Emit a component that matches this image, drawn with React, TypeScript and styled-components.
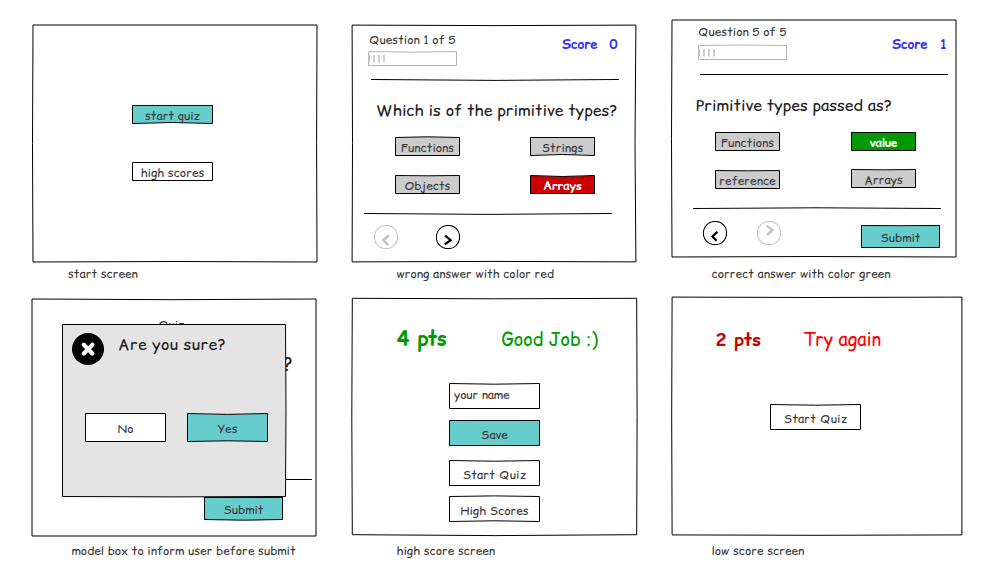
import React from 'react';
import styled, { createGlobalStyle } from 'styled-components';

const ink = '#000000';
const teal = '#66cccc';
const grey = '#cccccc';
const faint = '#c4c4c4';

const GlobalStyle = createGlobalStyle`
  body {
    margin: 0;
    background: #ffffff;
  }
  * {
    box-sizing: border-box;
  }
`;

const Board = styled.main`
  width: 981px;
  height: 564px;
  padding-left: 32px;
  overflow: hidden;
  display: grid;
  grid-template-columns: 320px 320px 309px;
  grid-template-rows: 281px 277px;
  font-family: 'Comic Relief', 'Comic Sans MS', 'Comic Neue', 'Open Sans', sans-serif;
`;

const Figure = styled.figure<{ $top: number; $left?: number }>`
  margin: 0;
  padding: ${(p) => p.$top}px 0 0 ${(p) => p.$left ?? 0}px;
  display: flex;
  flex-direction: column;
  align-items: flex-start;
`;

const Caption = styled.figcaption<{ $indent: number }>`
  margin: auto 0 -1px ${(p) => p.$indent}px;
  font-size: 12px;
  line-height: 16px;
  color: #3a3a3a;
  white-space: nowrap;
`;

const Label = styled.span<{ $track?: number; $color?: string; $bold?: boolean }>`
  font-size: 12px;
  line-height: 16px;
  font-weight: ${(p) => (p.$bold ? 700 : 400)};
  letter-spacing: ${(p) => p.$track ?? 0}px;
  color: ${(p) => p.$color ?? '#3a3a3a'};
  white-space: nowrap;
`;

const Surface = styled.div<{ $w: number; $h: number }>`
  position: relative;
  isolation: isolate;
  flex: none;
  width: ${(p) => p.$w}px;
  height: ${(p) => p.$h}px;
`;

const Screen = styled(Surface)`
  display: flex;
  flex-direction: column;
  align-items: flex-start;
`;

const Button = styled(Surface)`
  display: flex;
  align-items: center;
  justify-content: center;
  padding-top: 3px;
`;

const Field = styled(Button)`
  justify-content: flex-start;
  padding: 0 0 2px 5px;
`;

const Outline = styled.svg`
  position: absolute;
  inset: 0;
  z-index: -1;
  overflow: visible;
`;

type Bow = [number, number, number, number];

/* Hand-drawn rectangle; bow bends the top, right, bottom and left edges. */
function Sketch({ w, h, fill = '#ffffff', stroke = ink, bow = [0, 0, 0, 0], inset = 0.5 }: {
  w: number; h: number; fill?: string; stroke?: string; bow?: Bow; inset?: number;
}) {
  const a = inset;
  const r = w - inset;
  const b = h - inset;
  const d = `M${a} ${a}Q${w / 2} ${a + bow[0] * 2} ${r} ${a}Q${r + bow[1] * 2} ${h / 2} ${r} ${b}Q${w / 2} ${b + bow[2] * 2} ${a} ${b}Q${a + bow[3] * 2} ${h / 2} ${a} ${a}Z`;
  return (
    <Outline width={w} height={h}>
      <path d={d} fill={fill} stroke={stroke} strokeWidth={1} strokeLinejoin="round" />
    </Outline>
  );
}

function SketchButton({ w, h, text, track, fill, bow, bold, color }: {
  w: number; h: number; text: string; track?: number; fill?: string; bow?: Bow; bold?: boolean; color?: string;
}) {
  return (
    <Button $w={w} $h={h}>
      <Sketch w={w} h={h} fill={fill} bow={bow} />
      <Label $track={track} $bold={bold} $color={color}>{text}</Label>
    </Button>
  );
}

const RuleSvg = styled.svg<{ $top: number; $left: number }>`
  display: block;
  flex: none;
  overflow: visible;
  margin: ${(p) => p.$top}px 0 0 ${(p) => p.$left}px;
`;

function Rule({ top, left, bow = 0, w = 248 }: { top: number; left: number; bow?: number; w?: number }) {
  return (
    <RuleSvg width={w} height={1} $top={top} $left={left}>
      <path d={`M.5 .5Q${w / 2} ${0.5 + bow * 2} ${w - 0.5} .5`} fill="none" stroke={ink} strokeLinecap="round" />
    </RuleSvg>
  );
}

const StartMenu = styled.div`
  display: flex;
  flex-direction: column;
  gap: 38px;
  padding: 80px 0 0 99px;
`;

const Head = styled.div<{ $top: number; $left: number; $height: number }>`
  display: flex;
  height: ${(p) => p.$height}px;
  padding: ${(p) => p.$top}px 0 0 ${(p) => p.$left}px;
`;

const Progress = styled.div<{ $gap: number; $indent: number }>`
  display: flex;
  flex-direction: column;
  gap: ${(p) => p.$gap}px;
  width: 194px;
  & > span {
    padding-left: ${(p) => p.$indent}px;
  }
`;

const Score = styled.div<{ $top: number }>`
  display: flex;
  gap: 12px;
  margin-top: ${(p) => p.$top}px;
  font-size: 13px;
  line-height: 16px;
  font-weight: 700;
  letter-spacing: -0.1px;
  color: #3333ff;
`;

const Question = styled.h2<{ $top: number; $left: number }>`
  margin: ${(p) => p.$top}px 0 0 ${(p) => p.$left}px;
  font-size: 16px;
  line-height: 20px;
  font-weight: 400;
  color: #222222;
  white-space: nowrap;
`;

const Options = styled.div<{ $gap: number }>`
  display: flex;
  gap: ${(p) => p.$gap}px;
  padding: 17px 0 0 43px;
`;

const OptionColumn = styled.div<{ $gap: number }>`
  display: flex;
  flex-direction: column;
  gap: ${(p) => p.$gap}px;
`;

const Nav = styled.div<{ $left: number; $top: number; $gap: number }>`
  display: flex;
  align-items: flex-start;
  gap: ${(p) => p.$gap}px;
  padding: ${(p) => p.$top}px 0 0 ${(p) => p.$left}px;
`;

const SubmitSlot = styled.div`
  margin: 4px 0 0 50px;
`;

function Bar({ bow }: { bow: Bow }) {
  return (
    <Surface $w={89} $h={15}>
      <Sketch w={89} h={15} stroke="#b4b4b4" bow={bow} />
      <svg width="20" height="15" display="block">
        <path d="M1.2 4V11.5M6 4V11.5M11 4V11.5M16 4V11.5" stroke={faint} strokeWidth="1.6" />
      </svg>
    </Surface>
  );
}

function NavArrow({ d, off }: { d: string; off?: boolean }) {
  const c = off ? faint : ink;
  return (
    <svg width="24" height="24" fill="none" stroke={c}>
      <path d="M12 .4C18.6 .2 23.7 5.4 23.6 12C23.7 18.5 18.5 23.7 12 23.6C5.4 23.7 .3 18.5 .4 12.2C.2 5.6 5.5 .3 12.3 .5" strokeWidth="1.1" />
      <path d={d} strokeWidth={off ? 2.6 : 2.2} />
    </svg>
  );
}

const Behind = styled.div`
  display: flex;
  flex-direction: column;
  width: 284px;
  & > span:first-child {
    margin: 18px 0 0 126px;
  }
`;

const BehindQuestion = styled.div`
  margin: 20px 23px 0 0;
  text-align: right;
  font-size: 18px;
  line-height: 24px;
  color: #222222;
`;

const BehindSubmit = styled.div`
  margin: 17px 0 0 172px;
`;

const Modal = styled(Surface)`
  position: absolute;
  left: 30px;
  top: 25px;
  z-index: 1;
  display: flex;
  flex-direction: column;
`;

const ModalHead = styled.div`
  display: flex;
  padding: 9px 0 0 10px;
`;

const ModalTitle = styled.h2`
  margin: 1px 0 0 14px;
  font-size: 16px;
  line-height: 20px;
  font-weight: 400;
  letter-spacing: 0.35px;
  color: #222222;
`;

const ModalActions = styled.div`
  display: flex;
  gap: 21px;
  padding: 48px 0 0 23px;
`;

const Result = styled.div<{ $gap: number; $top: number; $left: number; $size: number }>`
  display: flex;
  align-items: baseline;
  gap: ${(p) => p.$gap}px;
  height: ${(p) => p.$top + 26}px;
  padding: ${(p) => p.$top}px 0 0 ${(p) => p.$left}px;
  line-height: 26px;
  white-space: nowrap;
  font-size: ${(p) => p.$size}px;
`;

const Points = styled.strong<{ $color: string; $track: number }>`
  font-weight: 700;
  letter-spacing: ${(p) => p.$track}px;
  color: ${(p) => p.$color};
`;

const Verdict = styled.span<{ $color: string }>`
  font-size: 18px;
  color: ${(p) => p.$color};
`;

const ScoreForm = styled.div`
  display: grid;
  grid-template-rows: 37px 40px 36px 26px;
  padding: 31px 0 0 97px;
`;

const Retry = styled.div`
  padding: 51px 0 0 98px;
`;

export default function App() {
  return (
    <>
      <GlobalStyle />
      <Board>
        <Figure $top={25} $left={1}>
          <Screen $w={284} $h={237}>
            <Sketch w={284} h={237} inset={0} bow={[0, -0.4, -0.5, -0.5]} />
            <StartMenu>
              <SketchButton w={81} h={19} text="start quiz" fill={teal} bow={[0, 0, -1, 0]} />
              <SketchButton w={81} h={19} text="high scores" />
            </StartMenu>
          </Screen>
          <Caption $indent={35}>start screen</Caption>
        </Figure>

        <Figure $top={25}>
          <Screen $w={284} $h={237}>
            <Sketch w={284} h={237} inset={0.1} bow={[0.5, -0.9, -0.5, 0.4]} />
            <Head $top={7} $left={16} $height={54}>
              <Progress $gap={3} $indent={1}>
                <Label>Question 1 of 5</Label>
                <Bar bow={[0.7, 0, 0, 0]} />
              </Progress>
              <Score $top={4}><span>Score</span><span>0</span></Score>
            </Head>
            <Rule top={0} left={19} bow={0.9} />
            <Question $top={20} $left={24}>Which is of the primitive types?</Question>
            <Options $gap={70}>
              <OptionColumn $gap={19}>
                <SketchButton w={65} h={19} text="Functions" fill={grey} bow={[-0.7, 0, 0, 0]} />
                <SketchButton w={65} h={19} text="Objects" fill={grey} bow={[0.3, 0, 0, 0]} />
              </OptionColumn>
              <OptionColumn $gap={19}>
                <SketchButton w={65} h={19} text="Strings" fill={grey} bow={[0, 0, -1, 0]} />
                <SketchButton w={65} h={19} text="Arrays" track={-0.2} fill="#cc0000" bow={[1, 0, 0, 0]} bold color="#ffffff" />
              </OptionColumn>
            </Options>
            <Rule top={19} left={12} bow={0.9} />
            <Nav $left={22} $top={11} $gap={38}>
              <NavArrow off d="M15 10.3L9.5 15L14.2 20.3" />
              <NavArrow d="M9 10.5L14.7 15.2L8.8 19.4" />
            </Nav>
          </Screen>
          <Caption $indent={44.5}>wrong answer with color red</Caption>
        </Figure>

        <Figure $top={20}>
          <Screen $w={284} $h={237}>
            <Sketch w={284} h={237} inset={0} bow={[0, 0, -0.5, -0.5]} />
            <Head $top={4} $left={26} $height={54}>
              <Progress $gap={5} $indent={-1}>
                <Label>Question 5 of 5</Label>
                <Bar bow={[-0.5, 0, 0, 0]} />
              </Progress>
              <Score $top={12}><span>Score</span><span>1</span></Score>
            </Head>
            <Rule top={0} left={28} />
            <Question $top={20} $left={24}>Primitive types passed as?</Question>
            <Options $gap={71}>
              <OptionColumn $gap={19}>
                <SketchButton w={65} h={19} text="Functions" fill={grey} />
                <SketchButton w={65} h={19} text="reference" fill={grey} bow={[0.3, 0, 0, 0]} />
              </OptionColumn>
              <OptionColumn $gap={18}>
                <SketchButton w={65} h={19} text="value" track={-0.2} fill="#009900" bold color="#ffffff" />
                <SketchButton w={65} h={19} text="Arrays" fill={grey} bow={[0.3, 0, 0, 0]} />
              </OptionColumn>
            </Options>
            <Rule top={19} left={21} bow={-0.7} />
            <Nav $left={31} $top={12} $gap={30}>
              <NavArrow d="M14.4 10.8L9.4 15.5L13.6 19.8" />
              <NavArrow off d="M9.8 4.7L15.4 9.1L10 14" />
              <SubmitSlot>
                <SketchButton w={79} h={23} text="Submit" fill={teal} bow={[0.2, 0, 0, 0]} />
              </SubmitSlot>
            </Nav>
          </Screen>
          <Caption $indent={39.5}>correct answer with color green</Caption>
        </Figure>

        <Figure $top={18}>
          <Screen $w={284} $h={237}>
            <Sketch w={284} h={237} inset={0} bow={[0.7, 0, 0, 0]} />
            <Behind>
              <Label>Quiz</Label>
              <BehindQuestion>?</BehindQuestion>
              <Rule top={102} left={32} />
              <BehindSubmit>
                <SketchButton w={79} h={23} text="Submit" fill={teal} bow={[0, 0, 0.7, 0]} />
              </BehindSubmit>
            </Behind>
            <Modal $w={224} $h={173}>
              <Sketch w={224} h={173} fill="#e4e4e4" bow={[0, 0.5, 0.4, 0]} />
              <ModalHead>
                <svg width="32" height="32">
                  <circle cx="16" cy="16" r="16" fill={ink} />
                  <path d="M11.8 11.8L20.4 20.4M20.4 11.8L11.8 20.4" stroke="#ffffff" strokeWidth="4.2" strokeLinecap="round" />
                </svg>
                <ModalTitle>Are you sure?</ModalTitle>
              </ModalHead>
              <ModalActions>
                <SketchButton w={81} h={29} text="No" />
                <SketchButton w={81} h={29} text="Yes" fill={teal} bow={[0.9, 0, -0.7, 0]} />
              </ModalActions>
            </Modal>
          </Screen>
          <Caption $indent={39.5}>model box to inform user before submit</Caption>
        </Figure>

        <Figure $top={17}>
          <Screen $w={285} $h={237}>
            <Sketch w={285} h={237} inset={0.3} bow={[0.5, 0.4, 0.9, -0.5]} />
            <Result $size={20} $gap={55} $top={28} $left={45}>
              <Points $color="#009900" $track={-0.25}>4 pts</Points>
              <Verdict $color="#009900">Good Job :)</Verdict>
            </Result>
            <ScoreForm>
              <Field $w={91} $h={26}>
                <Sketch w={91} h={26} bow={[0.7, 0, 0, 0]} />
                <Label $track={-0.1}>your name</Label>
              </Field>
              <SketchButton w={91} h={26} text="Save" fill={teal} />
              <SketchButton w={91} h={26} text="Start Quiz" track={0.2} bow={[0.7, 0, 0, 0]} />
              <SketchButton w={91} h={26} text="High Scores" bow={[-0.6, 0, -0.7, 0]} />
            </ScoreForm>
          </Screen>
          <Caption $indent={44.5}>high score screen</Caption>
        </Figure>

        <Figure $top={16}>
          <Screen $w={290} $h={238}>
            <Sketch w={290} h={238} inset={0.1} bow={[0.4, 0, 0.4, -0.4]} />
            <Result $size={18} $gap={42} $top={30} $left={43.5}>
              <Points $color="#cc0000" $track={-0.05}>2 pts</Points>
              <Verdict $color="#ff0000">Try again</Verdict>
            </Result>
            <Retry>
              <SketchButton w={91} h={26} text="Start Quiz" track={0.2} bow={[0.7, 0, 0, 0]} />
            </Retry>
          </Screen>
          <Caption $indent={39.5}>low score screen</Caption>
        </Figure>
      </Board>
    </>
  );
}
